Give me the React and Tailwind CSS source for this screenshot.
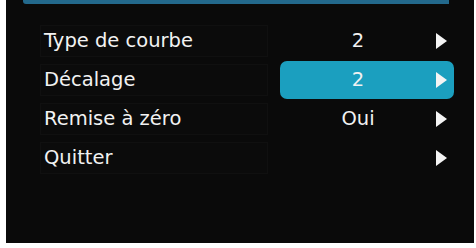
import React from 'react'

const ROWS = [
  { label: 'Type de courbe', value: '2' },
  { label: 'Décalage', value: '2', active: true },
  { label: 'Remise à zéro', value: 'Oui' },
  { label: 'Quitter', value: '' },
]

function Arrow() {
  return (
    <svg width="11" height="16" viewBox="0 0 11 16" className="shrink-0">
      <polygon points="0,0 11,8 0,16" fill="#f4f4f4" />
    </svg>
  )
}

export default function App() {
  return (
    <div className="w-[476px] h-[248px] bg-white">
      <div className="ml-[6px] w-[468px] h-[243px] bg-[#0a0a0a] flex flex-col">
        {/* header strip cut off at top */}
        <div className="ml-[17px] w-[426px] h-[4px] bg-[#23698c] rounded-bl-[3px]" />
        <div
          className="flex flex-col gap-[1px] pt-[18px] pl-[34px]"
          style={{ fontFamily: '"DejaVu Sans", Verdana, sans-serif' }}
        >
          {ROWS.map((row) => (
            <div key={row.label} className="flex items-center h-[38px]">
              <div className="w-[228px] h-[32px] flex items-center pl-[3px] text-[19.5px] text-[#f2f2f2] bg-[#0b0b0b] border border-[#101010]">
                {row.label}
              </div>
              <div className="w-[12px]" />
              <div
                className={`w-[174px] h-[38px] flex items-center pr-[7px] rounded-[7px] ${
                  row.active ? 'bg-[#1b9fbf]' : ''
                }`}
              >
                <span className="flex-1 text-center text-[19.5px] text-[#f2f2f2]">{row.value}</span>
                <Arrow />
              </div>
            </div>
          ))}
        </div>
      </div>
    </div>
  )
}
